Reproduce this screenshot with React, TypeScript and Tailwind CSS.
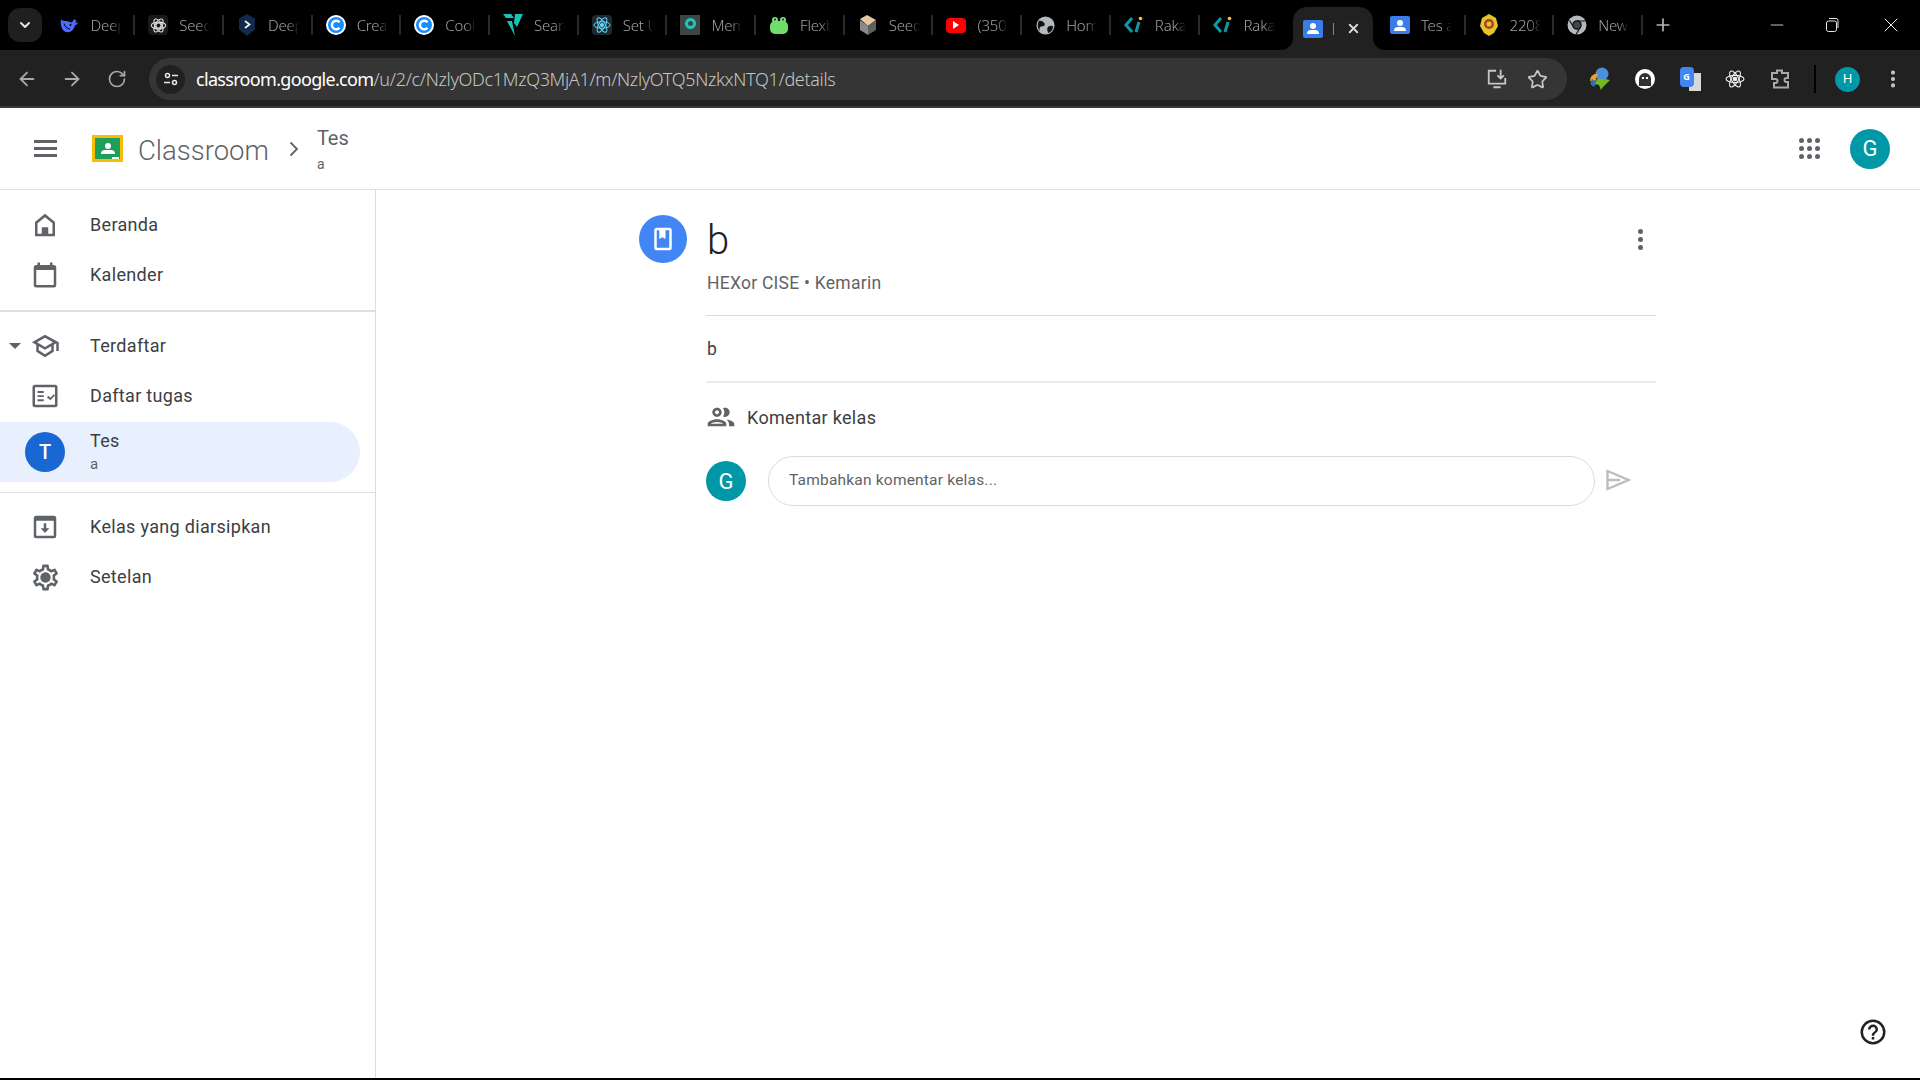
import React from 'react';
import { ArrowLeft, ArrowRight, RotateCw, Star, X, Plus, Minus, ChevronDown, EllipsisVertical } from 'lucide-react';

const Whale = () => (
  <svg viewBox="0 0 22 18" className="w-[25px] h-[20px]">
    <path d="M1 3c1 .5 2 1.500 4 1.500 3 0 6 .5 8 2 1-1 1.500-3 3-4 .2 1 .8 1.500 2.500 1.800-1 .7-1.500 1.500-1.500 2.500 1 0 2-.3 3-1-.3 1.500-1.500 3-3.500 3.500C15.500 13.500 12.500 17 8.500 17 3.500 17 0 12 1 3z" fill="#4d6bfe" />
    <circle cx="11.500" cy="9" r="1.100" fill="#000" />
    <path d="M4.500 7.500c.5 3 3 5.500 6.500 6" stroke="#000" strokeWidth="1.100" fill="none" />
  </svg>
);

const OpenAi = () => (
  <div className="w-5 h-5 rounded bg-[#1a1a1a] flex items-center justify-center">
    <svg viewBox="0 0 20 20" className="w-[17px] h-[17px]" fill="none" stroke="#dcdcdc" strokeWidth="1.300">
      <circle cx="10" cy="10" r="3" />
      <ellipse cx="10" cy="10" rx="8.500" ry="4" />
      <ellipse cx="10" cy="10" rx="8.500" ry="4" transform="rotate(60 10 10)" />
      <ellipse cx="10" cy="10" rx="8.500" ry="4" transform="rotate(120 10 10)" />
    </svg>
  </div>
);

const DeepHex = () => (
  <svg viewBox="0 0 20 22" className="w-5 h-[22px]">
    <path d="M10 0l8 4.500v11L10 22l-8-6.500v-11z" fill="#12294a" />
    <path d="M8 7l4.500 3.500L8 14" stroke="#e8eef7" strokeWidth="1.800" fill="none" />
  </svg>
);

const CoolC = () => (
  <svg viewBox="0 0 20 20" className="w-5 h-5">
    <circle cx="10" cy="10" r="10" fill="#fff" />
    <circle cx="10" cy="10" r="8" fill="#1a8cff" />
    <path d="M13.500 7.200a4.300 4.300 0 1 0 0 5.600" stroke="#fff" strokeWidth="2.400" fill="none" />
  </svg>
);

const TealV = () => (
  <svg viewBox="0 0 20 24" className="w-5 h-6">
    <path d="M0 1h8l3 4H3zM12 1h8l-6 13-3-4zM4 8h5l3 15z" fill="#17c3b2" />
  </svg>
);

const AtomMark = ({ color, size }: { color: string; size: string }) => (
  <svg viewBox="0 0 20 20" className={size} fill="none" stroke={color} strokeWidth="1.100">
    <ellipse cx="10" cy="10" rx="9" ry="3.600" />
    <ellipse cx="10" cy="10" rx="9" ry="3.600" transform="rotate(60 10 10)" />
    <ellipse cx="10" cy="10" rx="9" ry="3.600" transform="rotate(120 10 10)" />
    <circle cx="10" cy="10" r="1.800" fill={color} />
  </svg>
);

const ReactTile = () => (
  <div className="w-5 h-5 rounded-sm bg-[#1f2a30] flex items-center justify-center">
    <AtomMark color="#61dafb" size="w-[18px] h-[18px]" />
  </div>
);

const MemTile = () => (
  <div className="w-5 h-5 bg-[#3d4644] flex items-center justify-center">
    <div className="w-[11px] h-[11px] rounded-full border-[3px] border-[#1fc5b6] -mt-1" />
  </div>
);

const Frog = () => (
  <svg viewBox="0 0 20 20" className="w-5 h-5">
    <circle cx="6" cy="5" r="3" fill="#7de07a" />
    <circle cx="14" cy="5" r="3" fill="#7de07a" />
    <rect x="1" y="6" width="18" height="13" rx="5" fill="#6fdc6c" />
    <circle cx="6" cy="4.500" r="1" fill="#123" />
    <circle cx="14" cy="4.500" r="1" fill="#123" />
  </svg>
);

const BoxIcon = () => (
  <svg viewBox="0 0 20 22" className="w-5 h-[22px]">
    <path d="M9 1l9 5-8 6-8-7z" fill="#e7c6a2" />
    <path d="M2 6l8 6v9l-8-5z" fill="#8a8a8a" />
    <path d="M18 6l-8 6v9l8-5z" fill="#5f5f5f" />
  </svg>
);

const Youtube = () => (
  <div className="w-5 h-[15px] rounded-[4px] bg-[#ff0000] flex items-center justify-center">
    <div className="w-0 h-0 border-y-[4px] border-y-transparent border-l-[6px] border-l-white" />
  </div>
);

const GlobeIcon = () => (
  <svg viewBox="0 0 20 20" className="w-[19px] h-[19px]">
    <circle cx="10" cy="10" r="9.500" fill="#b6b9bb" />
    <path d="M3 5c3-.5 5 1 6 3s-1 3-3 3-3 2-2 5c-2-2-3-7-1-11zM13 11c2-1 4-1 5 0 0 3-2 6-5 7-1-2-2-5 0-7z" fill="#111" />
  </svg>
);

const RakaLogo = () => (
  <svg viewBox="0 0 20 20" className="w-5 h-5">
    <path d="M8 3l-6 7 6 7" stroke="#0d9aa8" strokeWidth="3" fill="none" />
    <path d="M12 17l3-10" stroke="#0d9aa8" strokeWidth="3" fill="none" />
    <circle cx="16.500" cy="3.500" r="1.800" fill="#f4c531" />
  </svg>
);

const PersonTile = () => (
  <div className="w-5 h-[18px] rounded-[2px] bg-[#3b7de8] flex flex-col items-center justify-center">
    <div className="w-[6px] h-[6px] rounded-full bg-white" />
    <div className="w-3 h-[4px] rounded-t-full bg-white mt-[1px]" />
  </div>
);

const Shield = () => (
  <svg viewBox="0 0 20 22" className="w-5 h-[22px]">
    <path d="M10 0l7 4 2 8-4 7-5 3-5-3-4-7 2-8z" fill="#e3c428" />
    <circle cx="10" cy="10" r="5" fill="#a8422c" />
    <circle cx="10" cy="10" r="2.500" fill="#e3c428" />
  </svg>
);

const ChromeMono = () => (
  <svg viewBox="0 0 20 20" className="w-5 h-5">
    <circle cx="10" cy="10" r="9.500" fill="#b6b9bb" />
    <path d="M10 6h8.500M6.500 12L2.500 5.500M13.500 12l-4.500 7.500" stroke="#111" strokeWidth="1.200" />
    <circle cx="10" cy="10" r="4.200" fill="#444" stroke="#111" strokeWidth="1.200" />
  </svg>
);

const tabs = [
  { icon: <Whale />, title: 'DeepSeek' },
  { icon: <OpenAi />, title: 'Seed' },
  { icon: <DeepHex />, title: 'DeepL' },
  { icon: <CoolC />, title: 'Create' },
  { icon: <CoolC />, title: 'Cool' },
  { icon: <TealV />, title: 'Search' },
  { icon: <ReactTile />, title: 'Set Up' },
  { icon: <MemTile />, title: 'Mem' },
  { icon: <Frog />, title: 'Flexbox' },
  { icon: <BoxIcon />, title: 'Seed' },
  { icon: <Youtube />, title: '(350)' },
  { icon: <GlobeIcon />, title: 'Home' },
  { icon: <RakaLogo />, title: 'Raka' },
  { icon: <RakaLogo />, title: 'Raka' },
];

const tabsAfter = [
  { icon: <PersonTile />, title: 'Tes a', sep: true },
  { icon: <Shield />, title: '2208', sep: true },
  { icon: <ChromeMono />, title: 'New', sep: true },
];

function Tab({ icon, title, sep }: { icon: React.ReactNode; title: string; sep: boolean }) {
  return (
    <div className="relative w-[88.7px] h-[50px] flex items-center shrink-0">
      <div className="w-5 ml-[13px] mr-[11px] flex justify-center shrink-0">{icon}</div>
      <div className="w-[31px] overflow-hidden whitespace-nowrap text-[15px] font-light tracking-[-0.2px] text-[#a0a0a0] [mask-image:linear-gradient(to_right,black_65%,transparent)]">{title}</div>
      {sep && <div className="absolute right-0 top-[15px] w-[2px] h-5 bg-[#2a2a2a]" />}
    </div>
  );
}

function TabStrip() {
  return (
    <div className="h-[50px] bg-black flex items-center shrink-0 font-['Noto_Sans',sans-serif]">
      <div className="ml-2 w-[34px] h-[34px] rounded-xl bg-[#1f1f1f] flex items-center justify-center shrink-0">
        <ChevronDown size={16} className="text-[#e3e3e3]" strokeWidth={3} />
      </div>
      <div className="ml-[4.600px] flex">
        {tabs.map((t, i) => (
          <Tab key={i} icon={t.icon} title={t.title} sep={i < 13} />
        ))}
        {/* active tab, with the flared bottom corners */}
        <div className="relative w-[80px] mx-[4.350px] h-[43px] mt-[7px] bg-[#212121] rounded-t-[14px] flex items-center shrink-0">
          <div className="absolute -left-3 bottom-0 w-3 h-3 bg-[#212121]">
            <div className="w-3 h-3 bg-black rounded-br-xl" />
          </div>
          <div className="absolute -right-3 bottom-0 w-3 h-3 bg-[#212121]">
            <div className="w-3 h-3 bg-black rounded-bl-xl" />
          </div>
          <div className="ml-[10px] mr-[10px] shrink-0"><PersonTile /></div>
          <div className="w-px h-3 bg-[#888]" />
          <X size={15} strokeWidth={3} className="ml-[12px] text-[#d8d8d8]" />
        </div>
        {tabsAfter.map((t, i) => (
          <Tab key={i} icon={t.icon} title={t.title} sep={t.sep} />
        ))}
      </div>
      <Plus size={20} className="ml-[10px] text-[#b5b5b5]" strokeWidth={2} />
      <Minus size={20} className="ml-[94px] text-[#e8e8e8]" strokeWidth={1} />
      <svg viewBox="0 0 16 16" className="w-4 h-4 ml-[37px]" fill="none" stroke="#e8e8e8" strokeWidth="1">
        <rect x="2.500" y="4" width="10" height="10.500" rx="2" />
        <path d="M5 1.500h7a2 2 0 0 1 2 2V11" />
      </svg>
      <X size={24} className="ml-[39px] text-[#e8e8e8]" strokeWidth={1} />
    </div>
  );
}

function ToolbarIcons() {
  return (
    <div className="flex items-center">
      <div className="w-[40px] flex justify-center">
        {/* IDM */}
        <svg viewBox="0 0 22 24" className="w-[22px] h-6">
          <circle cx="13" cy="7" r="6.500" fill="#4a8fd8" />
          <path d="M1 14c0-5 4-8 8-7l-3 8z" fill="#e8a22e" />
          <path d="M2 18c-1-2 0-5 1-6l5 3-3 5z" fill="#2f6fbe" />
          <path d="M8 12h8l5 1-7 7-2 3-2-5-4-1z" fill="#75b81f" />
        </svg>
      </div>
      <div className="w-[5px]" />
      <div className="w-[40px] flex justify-center">
        <div className="w-5 h-5 rounded-full bg-white flex items-center justify-center">
          <div className="w-3 h-[13px] rounded-t-full rounded-b-sm bg-[#333] flex justify-center gap-[2px] pt-1">
            <div className="w-[2px] h-[2px] bg-white" />
            <div className="w-[2px] h-[2px] bg-white" />
          </div>
        </div>
      </div>
      <div className="w-[5px]" />
      <div className="w-[40px] flex justify-center">
        <div className="relative w-[21px] h-[24px]">
          <div className="absolute right-0 bottom-0 w-3 h-[18px] bg-[#d8d8d8]" />
          <div className="absolute left-0 top-0 w-[14px] h-5 bg-[#4285f4] rounded-sm text-[9px] leading-5 text-center text-white font-bold">G</div>
        </div>
      </div>
      <div className="w-[5px]" />
      <div className="w-[40px] flex justify-center"><AtomMark color="#f0f0f0" size="w-5 h-5" /></div>
      <div className="w-[5px]" />
      <div className="w-[40px] flex justify-center">
        <svg viewBox="0 0 24 24" className="w-6 h-6" fill="none" stroke="#a8a8a8" strokeWidth="2">
          <path d="M4 6h5V3.500h5V6h6v5h-1.500a2 2 0 0 0 0 4H20v5.500H6V16h1.500a2 2 0 0 0 0-4H4z" />
        </svg>
      </div>
      <div className="w-[2px] h-7 bg-black ml-[14px]" />
      <div className="ml-[19px] w-[25px] h-[25px] rounded-full bg-[#0097a7] text-white text-[13px] flex items-center justify-center">H</div>
      <EllipsisVertical size={22} className="ml-[22px] text-[#c7c7c7]" strokeWidth={2.500} />
    </div>
  );
}

function Toolbar() {
  return (
    <div className="h-[58px] pt-[2px] bg-[#212121] flex items-center shrink-0 border-b-2 border-[#3a3a3a] font-['Noto_Sans',sans-serif]">
      <ArrowLeft size={22} className="ml-4 text-[#a8a8a8]" />
      <ArrowRight size={22} className="ml-[23px] text-[#a8a8a8]" />
      <RotateCw size={20} className="ml-[24px] text-[#a8a8a8]" />
      <div className="ml-[22px] w-[1418px] h-[42px] rounded-full bg-[#353535] flex items-center">
        <div className="ml-[7px] w-[29px] h-[29px] rounded-full bg-[#212121] flex items-center justify-center">
          <svg viewBox="0 0 16 16" className="w-4 h-4" fill="none" stroke="#e8e8e8" strokeWidth="1.500">
            <circle cx="4.500" cy="4.500" r="2" />
            <path d="M9 4.500h6M1 11.500h6" />
            <circle cx="11.500" cy="11.500" r="2" />
          </svg>
        </div>
        <div className="ml-[11px] text-[18px] font-light tracking-[-0.32px] whitespace-nowrap text-[#c3c6c7]">
          <span className="text-white font-normal tracking-[-0.68px]">classroom.google.com</span>/u/2/c/NzlyODc1MzQ3MjA1/m/NzlyOTQ5NzkxNTQ1/details
        </div>
        <div className="flex-1" />
        <svg viewBox="0 0 24 24" className="w-[22px] h-[22px]" fill="none" stroke="#c7c7c7" strokeWidth="2">
          <path d="M11 3H3v14h18v-6M8 21h8M16 2v9M12.500 8l3.500 3.500L19.500 8" />
        </svg>
        <Star size={21} className="ml-[19px] mr-[19px] text-[#c7c7c7]" strokeWidth={2} />
      </div>
      <div className="ml-[13px]"><ToolbarIcons /></div>
    </div>
  );
}

const Ico = ({ children, className = 'w-[30px] h-[30px]' }: { children: React.ReactNode; className?: string }) => (
  <svg viewBox="0 0 24 24" className={className} fill="#5f6368">{children}</svg>
);

function NavRow({ icon, label }: { icon: React.ReactNode; label: string }) {
  return (
    <div className="h-[50px] flex items-center shrink-0">
      <div className="w-[90px] flex justify-center shrink-0">{icon}</div>
      <span className="-mt-px text-[18px] tracking-[0.32px] text-[#3c4043]">{label}</span>
    </div>
  );
}

function Sidebar() {
  return (
    <aside className="w-[376px] border-r border-[#dadce0] shrink-0 flex flex-col pt-[10px]">
      <NavRow label="Beranda" icon={<Ico><path d="M12 3L4 9.500V21h16V9.500zM18 19h-3.500v-5h-5v5H6v-8.500l6-4.800 6 4.800z" /><path d="M9.500 14h5v6h-5z" /></Ico>} />
      <NavRow label="Kalender" icon={<Ico><path d="M19 4h-1V2h-2v2H8V2H6v2H5a2 2 0 0 0-2 2v14a2 2 0 0 0 2 2h14a2 2 0 0 0 2-2V6a2 2 0 0 0-2-2zm0 16H5V8h14z" /></Ico>} />
      <div className="h-[2px] bg-[#e0e0e0] mt-[10px] mb-[9px] shrink-0" />
      <div className="relative">
        <div className="absolute left-[9px] top-[22px] w-0 h-0 border-x-[6px] border-x-transparent border-t-[6px] border-t-[#5f6368]" />
        <NavRow label="Terdaftar" icon={<Ico className="w-[34px] h-[30px]"><path d="M12 3L1.500 9l3.500 2v5.500L12 21l7-4.500V11l2-1.200V16h2V9zM17 15.400l-5 3.200-5-3.200v-3.300l5 2.900 5-2.900zM12 12.700L5.600 9 12 5.300 18.400 9z" /></Ico>} />
      </div>
      <NavRow label="Daftar tugas" icon={<Ico><path d="M20 3H4a2 2 0 0 0-2 2v14a2 2 0 0 0 2 2h16a2 2 0 0 0 2-2V5a2 2 0 0 0-2-2zm0 16H4V5h16z" /><path d="M6 8h5v1.500H6zM6 11.300h5v1.500H6zM6 14.600h5v1.500H6zM13.500 13l1.200-1.200 1.500 1.500 2.800-2.800 1 1.100-3.800 3.800z" /></Ico>} />
      <div className="h-[60px] w-[360px] mt-[1px] rounded-r-full bg-[#e8f0fe] flex items-center shrink-0">
        <div className="w-[90px] flex justify-center shrink-0">
          <div className="w-10 h-10 rounded-full bg-[#1967d2] text-white text-[20px] font-medium flex items-center justify-center">T</div>
        </div>
        <div className="flex flex-col">
          <span className="text-[18px] leading-[24px] tracking-[0.32px] text-[#3c4043]">Tes</span>
          <span className="text-[15px] leading-[22px] text-[#5f6368]">a</span>
        </div>
      </div>
      <div className="h-px bg-[#e0e0e0] mt-[10px] mb-[9px] shrink-0" />
      <NavRow label="Kelas yang diarsipkan" icon={<Ico><path d="M19 3H5a2 2 0 0 0-2 2v14a2 2 0 0 0 2 2h14a2 2 0 0 0 2-2V5a2 2 0 0 0-2-2zm0 16H5V7h14z" /><path d="M11 9h2v4h2.500L12 16.800 8.500 13H11z" /></Ico>} />
      <NavRow label="Setelan" icon={<Ico className="w-[31px] h-[31px]"><path d="M19.430 12.980c.04-.32.07-.64.07-.98 0-.34-.03-.66-.07-.98l2.110-1.650c.19-.15.24-.42.12-.64l-2-3.460c-.09-.16-.26-.25-.44-.25-.06 0-.12.01-.17.03l-2.490 1c-.52-.4-1.080-.73-1.690-.98l-.38-2.650C14.460 2.180 14.250 2 14 2h-4c-.25 0-.46.18-.49.42l-.38 2.650c-.61.25-1.170.59-1.690.98l-2.490-1c-.06-.02-.12-.03-.18-.03-.17 0-.34.09-.43.25l-2 3.460c-.13.22-.07.49.12.64l2.110 1.650c-.04.32-.07.65-.07.98 0 .33.03.66.07.98l-2.110 1.650c-.19.15-.24.42-.12.64l2 3.460c.09.16.26.25.44.25.06 0 .12-.01.17-.03l2.490-1c.52.4 1.080.73 1.690.98l.38 2.650c.03.24.24.42.49.42h4c.25 0 .46-.18.49-.42l.38-2.650c.61-.25 1.170-.59 1.690-.98l2.490 1c.06.02.12.03.18.03.17 0 .34-.09.43-.25l2-3.460c.12-.22.07-.49-.12-.64l-2.110-1.650zm-1.980-1.710c.04.31.05.52.05.73 0 .21-.02.43-.05.73l-.14 1.130.89.7 1.080.84-.7 1.210-1.270-.51-1.040-.42-.9.68c-.43.32-.84.56-1.250.73l-1.060.43-.16 1.130-.2 1.350h-1.400l-.19-1.350-.16-1.130-1.060-.43c-.43-.18-.83-.41-1.230-.71l-.91-.7-1.060.43-1.270.51-.7-1.210 1.080-.84.89-.7-.14-1.130c-.03-.31-.05-.54-.05-.74s.02-.43.05-.73l.14-1.130-.89-.7-1.080-.84.7-1.210 1.270.51 1.040.42.9-.68c.43-.32.84-.56 1.250-.73l1.060-.43.16-1.130.2-1.350h1.390l.19 1.350.16 1.130 1.060.43c.43.18.83.41 1.230.71l.91.7 1.060-.43 1.270-.51.7 1.210-1.070.85-.89.7.14 1.130zM12 8c-2.210 0-4 1.790-4 4s1.790 4 4 4 4-1.790 4-4-1.790-4-4-4z" /></Ico>} />
    </aside>
  );
}

function ClassroomLogo() {
  return (
    <div className="w-[31px] h-[27px] bg-[#1e9e5a] border-[3px] border-[#fbbc04] flex flex-col items-center justify-center relative">
      <div className="w-[6px] h-[6px] rounded-full bg-white" />
      <div className="w-[14px] h-1 rounded-t-full bg-white mt-[1px]" />
      <div className="absolute right-[1px] bottom-0 w-[7px] h-[2px] bg-white" />
    </div>
  );
}

function AppHeader() {
  return (
    <header className="h-[82px] border-b border-[#e0e0e0] flex items-center shrink-0">
      <div className="ml-[34px] w-[23px] flex flex-col gap-[4px]">
        <div className="h-[3px] bg-[#5f6368]" />
        <div className="h-[3px] bg-[#5f6368]" />
        <div className="h-[3px] bg-[#5f6368]" />
      </div>
      <div className="ml-[35px]"><ClassroomLogo /></div>
      <span className="ml-[15px] pt-[4px] text-[27.500px] font-light text-[#5f6368]">Classroom</span>
      <svg viewBox="0 0 10 16" className="ml-[20px] w-[10px] h-4" fill="none" stroke="#5f6368" strokeWidth="1.800"><path d="M1.500 1.500L8 8l-6.500 6.500" /></svg>
      <div className="ml-[18px] pt-[2px] flex flex-col text-[#5f6368]">
        <span className="text-[20px] leading-[28px]">Tes</span>
        <span className="text-[14px] leading-[24px]">a</span>
      </div>
      <div className="flex-1" />
      <div className="grid grid-cols-3 gap-[3px]">
        {Array.from({ length: 9 }).map((_, i) => (
          <div key={i} className="w-[5px] h-[5px] rounded-full bg-[#5f6368]" />
        ))}
      </div>
      <div className="ml-[30px] mr-[30px] w-10 h-10 rounded-full bg-[#0097a7] text-white text-[22px] flex items-center justify-center">G</div>
    </header>
  );
}

function Details() {
  return (
    <main className="flex-1 pl-[263px] pt-[25px] relative">
      <div className="flex w-[1017px]">
        <div className="w-12 h-12 rounded-full bg-[#4285f4] flex items-center justify-center shrink-0">
          <svg viewBox="0 0 24 24" className="w-[30px] h-[30px]" fill="#fff">
            <path d="M17 3H7a2 2 0 0 0-2 2v14a2 2 0 0 0 2 2h10a2 2 0 0 0 2-2V5a2 2 0 0 0-2-2zm0 16H7V5h2v7l2.500-1.500L14 12V5h3z" />
          </svg>
        </div>
        <div className="ml-[19px] flex-1">
          <div className="flex items-start justify-between pt-px">
            <div className="pl-px">
              <div className="text-[40px] leading-[50px] font-light text-[#202124]">b</div>
              <div className="mt-[5px] text-[17.500px] leading-[24px] tracking-[0.25px] text-[#5f6368]">HEXor CISE • Kemarin</div>
            </div>
            <div className="mr-[13px] mt-[13px] flex flex-col gap-[3px]">
              <div className="w-[5px] h-[5px] rounded-full bg-[#5f6368]" />
              <div className="w-[5px] h-[5px] rounded-full bg-[#5f6368]" />
              <div className="w-[5px] h-[5px] rounded-full bg-[#5f6368]" />
            </div>
          </div>
          <div className="mt-[20px] h-px bg-[#dadce0]" />
          <div className="h-[65px] pt-px flex items-center pl-px text-[17.500px] text-[#3c4043]">b</div>
          <div className="h-[2px] bg-[#e8eaed]" />
          <div className="mt-[19px] h-[30px] flex items-center">
            <svg viewBox="0 0 24 24" className="w-[32px] h-[32px] -ml-px" fill="#5f6368">
              <path d="M9 13.750c-2.340 0-7 1.170-7 3.500V19h14v-1.750c0-2.330-4.660-3.500-7-3.500zM4.340 17c.84-.58 2.870-1.250 4.660-1.250s3.820.67 4.660 1.250zM9 12c1.930 0 3.500-1.570 3.500-3.500S10.930 5 9 5 5.500 6.570 5.500 8.500 7.070 12 9 12zm0-5c.83 0 1.500.67 1.500 1.500S9.830 10 9 10s-1.500-.67-1.500-1.500S8.170 7 9 7zm7.040 6.810c1.160.84 1.960 1.960 1.960 3.440V19h4v-1.750c0-2.020-3.500-3.170-5.960-3.440zM15 12c1.930 0 3.500-1.570 3.500-3.500S16.930 5 15 5c-.54 0-1.040.13-1.500.35.630.89 1 1.980 1 3.150s-.37 2.260-1 3.150c.46.22.96.35 1.500.35z" />
            </svg>
            <span className="ml-[10px] text-[18px] tracking-[0.32px] text-[#3c4043]">Komentar kelas</span>
          </div>
          <div className="mt-[24px] flex items-center">
            <div className="w-10 h-10 rounded-full bg-[#0097a7] text-white text-[22px] flex items-center justify-center shrink-0">G</div>
            <div className="ml-[22px] w-[827px] h-[50px] rounded-full border border-[#dadce0] flex items-center pl-5 text-[15.500px] tracking-[0.2px] text-[#5f6368]">
              Tambahkan komentar kelas...
            </div>
            <svg viewBox="0 0 25 22" className="ml-[11px] -mt-[2px] w-[25px] h-[22px]" fill="none" stroke="#bdbdbd" strokeWidth="2.400">
              <path d="M1.500 2l21 9-21 9zM2 11h12" />
            </svg>
          </div>
        </div>
      </div>
      {/* floating help button */}
      <svg viewBox="0 0 24 24" className="absolute right-[32px] bottom-[31px] w-[30px] h-[30px]" fill="#202124">
        <path d="M11 18h2v-2h-2zm1-16a10 10 0 1 0 0 20 10 10 0 0 0 0-20zm0 18a8 8 0 1 1 0-16 8 8 0 0 1 0 16zm0-14a4 4 0 0 0-4 4h2a2 2 0 1 1 4 0c0 2-3 1.750-3 5h2c0-2.250 3-2.500 3-5a4 4 0 0 0-4-4z" />
      </svg>
    </main>
  );
}

export default function App() {
  return (
    <div className="w-[1920px] h-[1080px] overflow-hidden flex flex-col bg-white border-b-2 border-black font-[Roboto,sans-serif]">
      <TabStrip />
      <Toolbar />
      <AppHeader />
      <div className="flex-1 flex min-h-0">
        <Sidebar />
        <Details />
      </div>
    </div>
  );
}
